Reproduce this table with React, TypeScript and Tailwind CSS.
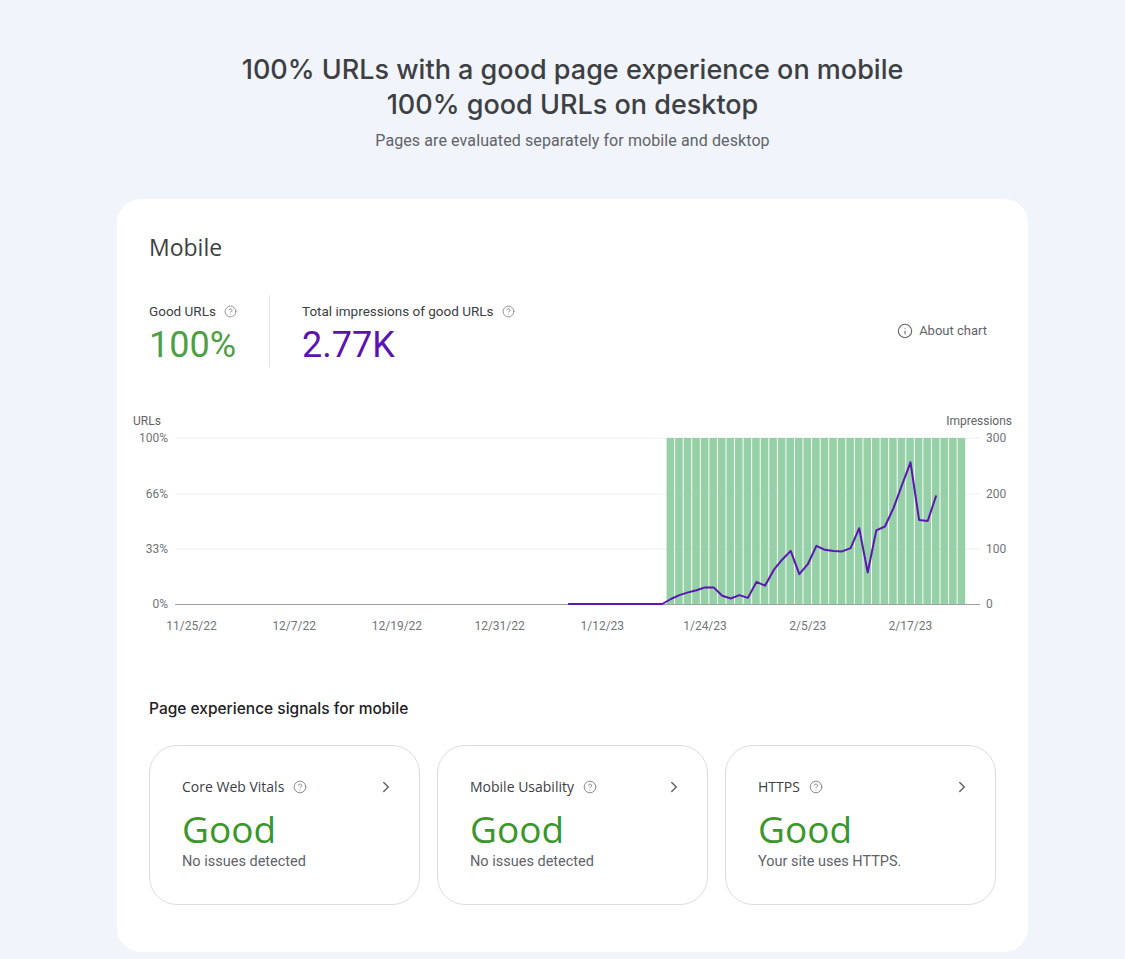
import { CircleHelp, ChevronRight, Info } from "lucide-react";

const GSANS = "font-['Open_Sans',sans-serif]";
const HEAD = "font-['Inter',sans-serif]";
const ROBOTO = "font-['Roboto',sans-serif]";

// daily impressions from day 44 (1/8/23) on
const impressions: Record<number, number> = {
  56: 9, 57: 16, 58: 21, 59: 25, 60: 30, 61: 30, 62: 15, 63: 10, 64: 16, 65: 11,
  66: 40, 67: 33, 68: 61, 69: 80, 70: 96, 71: 54, 72: 72, 73: 105, 74: 98, 75: 96,
  76: 95, 77: 101, 78: 137, 79: 57, 80: 133, 81: 140, 82: 173, 83: 215, 84: 256,
  85: 152, 86: 150, 87: 196,
};

const X0 = 191.5;
const DAY = 8.56;
const TOP = 438;
const BASE = 604;
const dayX = (d: number) => X0 + d * DAY;
const impY = (v: number) => BASE - (v * (BASE - TOP)) / 300;

const xLabels = ["11/25/22", "12/7/22", "12/19/22", "12/31/22", "1/12/23", "1/24/23", "2/5/23", "2/17/23"];

function Chart() {
  const pts: string[] = [];
  for (let d = 44; d <= 87; d++) {
    pts.push(`${dayX(d).toFixed(1)},${impY(impressions[d] ?? 0).toFixed(1)}`);
  }
  const bars = [];
  for (let d = 56; d <= 90; d++) bars.push(d);

  return (
    <svg
      viewBox="117 400 911 245"
      width={911}
      height={245}
      className={`-mx-8 mt-[33px] block ${ROBOTO}`}
    >
      {[438, 494, 549].map((y) => (
        <line key={y} x1={175} x2={980} y1={y} y2={y} stroke="#eceef1" strokeWidth={1} />
      ))}
      {bars.map((d) => (
        <rect key={d} x={dayX(d) - 4.3} y={TOP} width={7.6} height={BASE - TOP} fill="#96d0a7" />
      ))}
      <line x1={175} x2={980} y1={BASE + 0.5} y2={BASE + 0.5} stroke="#9aa0a6" strokeWidth={1} />
      <polyline points={pts.join(" ")} fill="none" stroke="#5c16b4" strokeWidth={2} strokeLinejoin="round" />

      <text x={133} y={425} fontSize={12} fill="#5f6368">URLs</text>
      <text x={1012} y={425} fontSize={12} fill="#5f6368" textAnchor="end">Impressions</text>
      {[
        ["100%", "300", 438],
        ["66%", "200", 494],
        ["33%", "100", 549],
        ["0%", "0", 604],
      ].map(([l, r, y]) => (
        <g key={l as string}>
          <text x={168} y={(y as number) + 4} fontSize={12} fill="#70757a" textAnchor="end">{l}</text>
          <text x={986} y={(y as number) + 4} fontSize={12} fill="#70757a">{r}</text>
        </g>
      ))}
      {xLabels.map((l, i) => (
        <text key={l} x={X0 + i * 102.7} y={630} fontSize={12} fill="#70757a" textAnchor="middle">
          {l}
        </text>
      ))}
    </svg>
  );
}

function SignalCard({ title, note }: { title: string; note: string }) {
  return (
    <div className="flex h-[160px] w-[271px] flex-col rounded-[28px] border border-[#dadce0] bg-white pl-[32px] pr-[24px] pt-[31px]">
      <div className="flex h-5 items-center justify-between">
        <div className="flex items-center gap-[9px]">
          <span className={`${GSANS} text-[14px] leading-5 text-[#3c4043]`}>{title}</span>
          <CircleHelp size={14} strokeWidth={1.6} className="text-[#80868b]" />
        </div>
        <ChevronRight size={18} strokeWidth={2} className="text-[#5f6368]" />
      </div>
      <div className={`${GSANS} mt-[12px] text-[37px] leading-[40px] text-[#3b962c]`}>Good</div>
      <div className={`${ROBOTO} mt-[3px] text-[14.5px] leading-5 text-[#5f6368]`}>{note}</div>
    </div>
  );
}

export default function App() {
  return (
    <main className="min-h-screen bg-[#f1f4fb]">
      <header className="flex flex-col items-center pl-5 pt-[52px]">
        <h1 className={`${HEAD} text-[27px] font-medium leading-[35px] text-[#3c4043]`}>
          100% URLs with a good page experience on mobile
        </h1>
        <h2 className={`${HEAD} text-[27px] font-medium leading-[35px] text-[#3c4043]`}>
          100% good URLs on desktop
        </h2>
        <p className={`${ROBOTO} mt-[9px] text-[16px] leading-5 tracking-[0.1px] text-[#5f6368]`}>
          Pages are evaluated separately for mobile and desktop
        </p>
      </header>

      <section className="ml-[117px] mt-[48px] w-[911px] rounded-[24px] bg-white px-8 pb-[47px] pt-[34px]">
        <h3 className={`${GSANS} text-[23px] leading-[28px] text-[#3c4043]`}>Mobile</h3>

        {/* metrics */}
        <div className="mt-[34px] flex h-[72px] items-stretch">
          <div className="w-[120px] pt-2">
            <div className="flex items-center gap-[8px]">
              <span className={`${ROBOTO} text-[13.5px] leading-4 text-[#3c4043]`}>Good URLs</span>
              <CircleHelp size={13} strokeWidth={1.6} className="text-[#80868b]" />
            </div>
            <div className={`${ROBOTO} mt-[6px] text-[36px] leading-[40px] text-[#4e9f46]`}>100%</div>
          </div>
          <div className="w-px bg-[#e3e3e3]" />
          <div className="pl-[32px] pt-2">
            <div className="flex items-center gap-[8px]">
              <span className={`${ROBOTO} text-[13.5px] leading-4 text-[#3c4043]`}>
                Total impressions of good URLs
              </span>
              <CircleHelp size={13} strokeWidth={1.6} className="text-[#80868b]" />
            </div>
            <div className={`${ROBOTO} mt-[6px] text-[36px] leading-[40px] text-[#5b14b0]`}>2.77K</div>
          </div>
          <div className="ml-auto flex items-center gap-[6px] self-center pr-[9px]">
            <Info size={16} strokeWidth={1.6} className="text-[#5f6368]" />
            <span className={`${ROBOTO} text-[13px] text-[#5f6368]`}>About chart</span>
          </div>
        </div>

        <Chart />

        <h4 className={`${HEAD} mt-[54px] text-[15.5px] font-medium leading-5 text-[#202124]`}>
          Page experience signals for mobile
        </h4>
        <div className="mt-[26px] flex gap-[17px]">
          <SignalCard title="Core Web Vitals" note="No issues detected" />
          <SignalCard title="Mobile Usability" note="No issues detected" />
          <SignalCard title="HTTPS" note="Your site uses HTTPS." />
        </div>
      </section>
    </main>
  );
}
